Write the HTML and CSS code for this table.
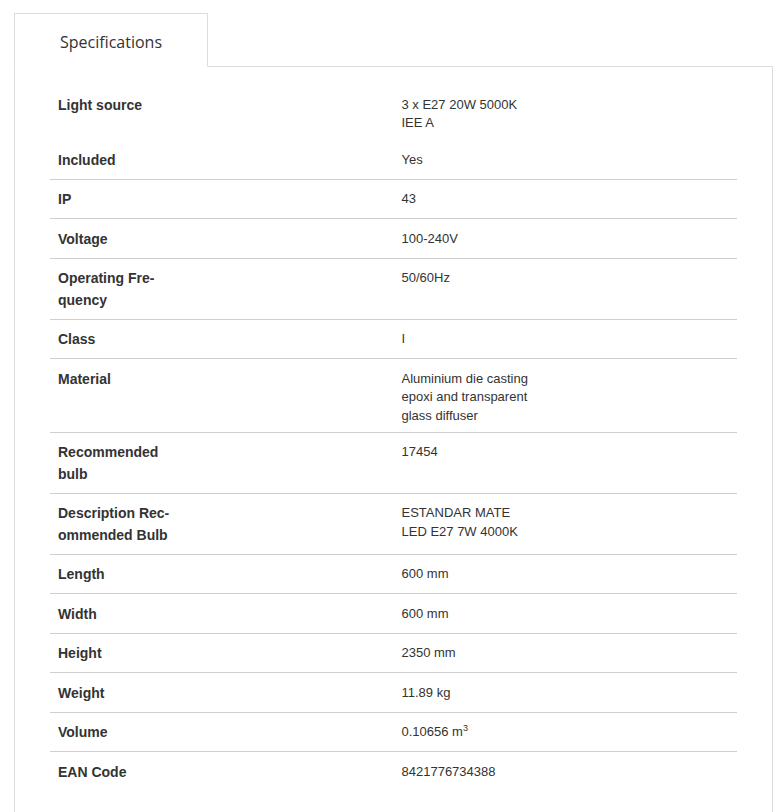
FILE: index.html
```html
<!DOCTYPE html>
<html lang="en">
<head>
<meta charset="utf-8">
<title>Specifications</title>
<link rel="stylesheet" href="styles.css">
</head>
<body>
<div class="wrap">
  <ul class="tabs">
    <li class="tab active">Specifications</li>
  </ul>
  <div class="panel">
    <table class="specs">
      <tbody>
        <tr><th><span class="lbl">Light source</span></th><td>3 x E27 20W 5000K<br>IEE A</td></tr>
        <tr><th><span class="lbl">Included</span></th><td>Yes</td></tr>
        <tr><th><span class="lbl">IP</span></th><td>43</td></tr>
        <tr><th><span class="lbl">Voltage</span></th><td>100-240V</td></tr>
        <tr><th><span class="lbl">Operating Fre&shy;quency</span></th><td>50/60Hz</td></tr>
        <tr><th><span class="lbl">Class</span></th><td>I</td></tr>
        <tr><th><span class="lbl">Material</span></th><td>Aluminium die casting<br>epoxi and transparent<br>glass diffuser</td></tr>
        <tr><th><span class="lbl">Recommended bulb</span></th><td>17454</td></tr>
        <tr><th><span class="lbl">Description Rec&shy;ommended Bulb</span></th><td>ESTANDAR MATE<br>LED E27 7W 4000K</td></tr>
        <tr><th><span class="lbl">Length</span></th><td>600 mm</td></tr>
        <tr><th><span class="lbl">Width</span></th><td>600 mm</td></tr>
        <tr><th><span class="lbl">Height</span></th><td>2350 mm</td></tr>
        <tr><th><span class="lbl">Weight</span></th><td>11.89 kg</td></tr>
        <tr><th><span class="lbl">Volume</span></th><td>0.10656 m<sup>3</sup></td></tr>
        <tr><th><span class="lbl">EAN Code</span></th><td>8421776734388</td></tr>
      </tbody>
    </table>
  </div>
</div>
</body>
</html>
```

FILE: styles.css
```css
html, body {
  margin: 0;
  padding: 0;
  background: #fff;
}

.wrap {
  margin: 13px 1px 0 14px;
}

.tabs {
  list-style: none;
  margin: 0;
  padding: 0;
  display: flex;
  border-bottom: 1px solid #dcdcdc;
}

.tab {
  font-family: "Open Sans", "Noto Sans", sans-serif;
  font-size: 16px;
  line-height: 22px;
  color: #333;
  padding: 17px 45px 13px 45px;
  border: 1px solid #dcdcdc;
  border-bottom: 1px solid #fff;
  background: #fff;
  margin-bottom: -1px;
}

.panel {
  border-left: 1px solid #dcdcdc;
  border-right: 1px solid #dcdcdc;
  padding: 17px 35px 40px 35px;
}

.specs {
  width: 100%;
  border-collapse: collapse;
  table-layout: fixed;
  font-family: "Liberation Sans", Arial, sans-serif;
  color: #333;
}

.specs tr {
  border-top: 1px solid #cfcfcf;
}

.specs tr:nth-child(1),
.specs tr:nth-child(2) {
  border-top-color: transparent;
}

.specs th,
.specs td {
  box-sizing: border-box;
  vertical-align: top;
  text-align: left;
}

.specs th {
  width: 50%;
  padding: 9.5px 8px 7.5px 8px;
  font-weight: bold;
  font-size: 14px;
  line-height: 21.5px;
  color: #333;
}

.lbl {
  display: block;
  max-width: 120px;
  hyphens: manual;
}

.specs td {
  padding: 10.5px 8px 6.5px 8px;
  font-size: 13px;
  line-height: 18.5px;
  color: #333;
}

.specs sup {
  font-size: 9px;
  line-height: 0;
  vertical-align: 5px;
}
```
